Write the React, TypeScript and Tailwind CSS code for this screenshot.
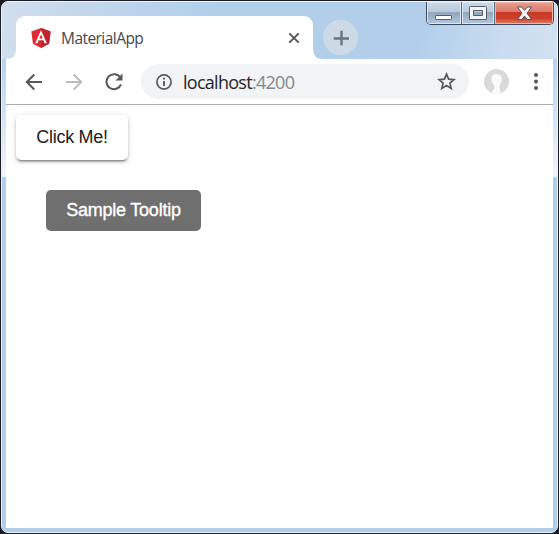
import React from "react";

function AngularLogo() {
  return (
    <svg className="h-5 w-5 shrink-0" viewBox="0 0 20 20">
      <path d="M10 0L19.6 3.4L18.1 15.8L10 20L1.9 15.8L.4 3.4Z" fill="#dd2c32" />
      <path d="M10 0L19.6 3.4L18.1 15.8L10 20Z" fill="#bf2430" />
      <path d="M10 2.3L4.2 15.2H6.4L7.6 12.2H12.4L13.6 15.2H15.8ZM10 6.4L11.7 10.4H8.3Z" fill="#fff" fillRule="evenodd" />
    </svg>
  );
}

function Tab() {
  return (
    <div className="relative ml-[10px] flex h-[43px] w-[297px] items-center rounded-t-[9px] bg-white pr-[13px] pl-[15px]">
      <svg className="absolute bottom-0 -left-[10px] h-[10px] w-[10px]" viewBox="0 0 10 10">
        <path d="M10 0V10H0Q10 10 10 0Z" fill="#fff" />
      </svg>
      <svg className="absolute -right-[10px] bottom-0 h-[10px] w-[10px]" viewBox="0 0 10 10">
        <path d="M0 0V10H10Q0 10 0 0Z" fill="#fff" />
      </svg>
      <AngularLogo />
      <span className="ml-[10px] flex-1 font-['Open_Sans',sans-serif] text-[15.5px] leading-5 tracking-[-0.55px] text-[#45484c]">MaterialApp</span>
      <svg className="h-3 w-3" viewBox="0 0 12 12" stroke="#505356" strokeWidth="1.9">
        <path d="M1.3 1.3L10.7 10.7M10.7 1.3L1.3 10.7" />
      </svg>
    </div>
  );
}

function WindowControls() {
  return (
    <div className="absolute top-0 right-[3px] flex h-[23px] w-[128px] overflow-hidden rounded-b-[5px] border border-t-0 border-[#3e4959]">
      <div className="flex w-[35px] justify-center border-r border-[#5c6b7c] bg-[linear-gradient(#cbd8e7_0%,#b8c9db_45%,#91a6bc_48%,#b1c7dd_100%)] shadow-[inset_0_0_0_1px_#dce8f4]">
        <svg className="mt-[13px] h-[6px] w-[18px]" viewBox="0 0 18 6">
          <rect x=".5" y=".5" width="16" height="4" rx=".6" fill="#fff" stroke="#555f6c" />
        </svg>
      </div>
      <div className="flex w-[33px] justify-center border-r border-[#5c6b7c] bg-[linear-gradient(#cbd8e7_0%,#b8c9db_45%,#91a6bc_48%,#b1c7dd_100%)] shadow-[inset_0_0_0_1px_#dce8f4]">
        <svg className="mt-[4px] h-[15px] w-[18px]" viewBox="0 0 18 15">
          <path d="M.5 1.5Q.5.5 1.5.5H16.5Q17.5.5 17.5 1.5V13.5H.5ZM4.5 4.5V9.5H13.5V4.5Z" fill="#f5f5f5" fillRule="evenodd" stroke="#555f6c" />
        </svg>
      </div>
      <div className="flex flex-1 justify-center bg-[linear-gradient(#e7a093_0%,#db7a69_43%,#c63823_48%,#cd402b_75%,#df8066_100%)] shadow-[inset_0_0_0_1px_#f0b6a8]">
        <svg className="mt-[4px] h-[15px] w-[17px]" viewBox="0 0 17 15">
          <path d="M1.5 1H5.5L8.5 4.4L11.5 1H15.5L11 7.2L15.5 13.5H11.3L8.5 10L5.7 13.5H1.5L6 7.2Z" fill="#f6f6f6" stroke="#505661" strokeLinejoin="round" />
        </svg>
      </div>
    </div>
  );
}

function Toolbar() {
  return (
    <div className="flex h-[46px] items-center border-b border-[#a9abad] bg-white">
      <svg className="ml-[19px] h-[18px] w-[18px]" viewBox="0 0 18 18" fill="none" stroke="#55585d" strokeWidth="2">
        <path d="M17 9H2M9.3 1.5L1.8 9L9.3 16.5" />
      </svg>
      <svg className="ml-[22px] h-[18px] w-[18px]" viewBox="0 0 18 18" fill="none" stroke="#b9bbbe" strokeWidth="2">
        <path d="M1 9H16M8.7 1.5L16.2 9L8.7 16.5" />
      </svg>
      <svg className="ml-[22px] h-[18px] w-[18px]" viewBox="0 0 18 18" fill="none" stroke="#55585d" strokeWidth="2">
        <path d="M15.2 4.5A7.5 7.5 0 1 0 16 11.3" />
        <path d="M17.5 .5V7.5H10.5Z" fill="#55585d" stroke="none" />
      </svg>
      <div className="ml-[18px] flex h-[35px] w-[328px] items-center rounded-full bg-[#f1f3f4] pr-[13px] pl-[15px]">
        <svg className="h-4 w-4 shrink-0" viewBox="0 0 16 16" fill="none" stroke="#55585d" strokeWidth="1.7">
          <circle cx="8" cy="8" r="7.1" />
          <path d="M8 7.1V12M8 3.8V5.6" strokeWidth="1.9" />
        </svg>
        <span className="ml-[11px] flex-1 font-['Open_Sans',sans-serif] text-[18px] leading-6 tracking-[-0.72px] text-[#25272a]">
          localhost<span className="text-[#85888c]">:4200</span>
        </span>
        <svg className="h-[19px] w-[19px]" viewBox="0 0 19 19" fill="none" stroke="#55585d" strokeWidth="1.7">
          <path d="M9.5 2.1L11.6 7.1L17 7.6L12.9 11.1L14.2 16.4L9.5 13.6L4.8 16.4L6.1 11.1L2 7.6L7.4 7.1Z" />
        </svg>
      </div>
      <svg className="ml-[15px] h-[25px] w-[25px]" viewBox="0 0 25 25">
        <defs>
          <clipPath id="avatar"><circle cx="12.5" cy="12.5" r="12.5" /></clipPath>
        </defs>
        <g clipPath="url(#avatar)">
          <rect width="25" height="25" fill="#d8d9da" />
          <path d="M12.5 5C9 5 7.2 7.2 7.5 10.4C7.6 13.2 9 15.2 10.3 16.3V19.5Q9.6 21.5 7.5 22.5L10 25H17.2Q16 22 15.6 19V16.5Q18 13.7 17.9 9.8C17.7 6.6 15.8 5 12.5 5Z" fill="#fafafa" />
        </g>
      </svg>
      <svg className="ml-[25px] h-[18px] w-[4px]" viewBox="0 0 4 18" fill="#55585d">
        <circle cx="2" cy="2" r="2" />
        <circle cx="2" cy="8.5" r="2" />
        <circle cx="2" cy="15" r="2" />
      </svg>
    </div>
  );
}

export default function App() {
  return (
    <div className="h-[534px] w-[559px] overflow-hidden bg-[#1c1c24] p-px">
      <div className="relative flex h-[532px] w-[557px] flex-col overflow-hidden rounded-[7px] border border-[#e9f4fc] bg-[#b1cee9] px-1 pb-1">
        <div className="absolute inset-x-0 top-0 h-[175px] bg-[linear-gradient(to_bottom,transparent_25%,#eff5fb_100%)]" />
        <div className="absolute inset-x-0 top-0 h-[57px] bg-[linear-gradient(100deg,#d0dfed_0%,#bfd5eb_20%,#b1cfeb_38%,#b1cfeb_75%,#cadcef_90%,#d1e1f0_100%)]" />
        <WindowControls />
        <div className="relative flex h-[57px] shrink-0 items-end">
          <Tab />
          <button className="mb-[4px] ml-[10px] flex h-[35px] w-[35px] items-center justify-center rounded-full bg-[#ced9e6]">
            <svg className="h-4 w-4" viewBox="0 0 16 16" stroke="#6b737d" strokeWidth="2.4">
              <path d="M8.5 .7V15.3M.7 8.5H16" />
            </svg>
          </button>
        </div>
        <div className="relative flex min-h-0 flex-1 flex-col bg-white">
          <Toolbar />
          <main className="flex flex-1 flex-col items-start pt-[10px] pl-[10px] font-['Liberation_Sans',Arial,sans-serif] text-[18px]">
            <button className="h-[45px] w-[112px] rounded-[5px] bg-white leading-[45px] tracking-[-0.3px] text-[#202020] shadow-[0_3px_2px_-2px_rgba(0,0,0,0.35),0_2px_3px_rgba(0,0,0,0.2),0_1px_6px_rgba(0,0,0,0.12)]">
              Click Me!
            </button>
            <div className="mt-[30px] ml-[30px] h-[41px] w-[155px] rounded-[5px] bg-[#6f6f6f] text-center leading-[41px] tracking-[-0.24px] text-white [-webkit-text-stroke:0.35px_white]">
              Sample Tooltip
            </div>
          </main>
        </div>
      </div>
    </div>
  );
}
